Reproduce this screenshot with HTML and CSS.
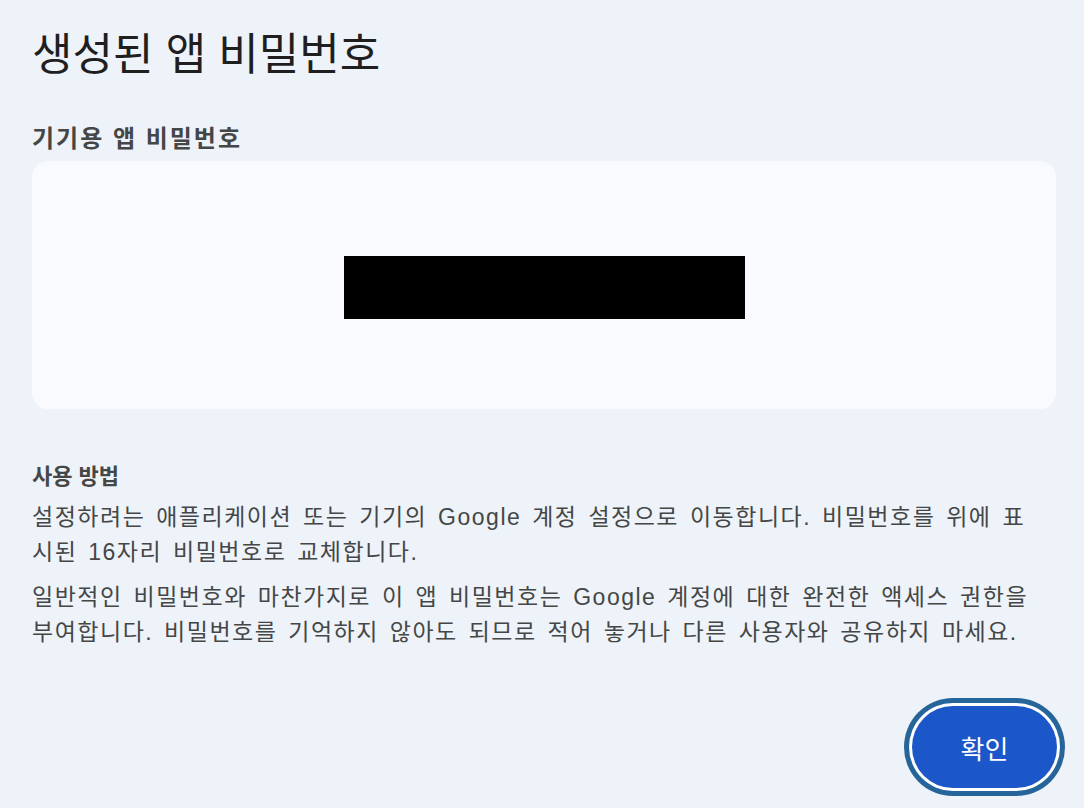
FILE: index.html
```html
<!DOCTYPE html>
<html lang="ko">
<head>
    <meta charset="UTF-8">
    <meta name="viewport" content="width=device-width, initial-scale=1.0">
    <title>생성된 앱 비밀번호</title>
    <link rel="stylesheet" href="styles.css">
</head>
<body>

    <div class="dialog">
        <h1 class="title">생성된 앱 비밀번호</h1>

        <h2 class="label">기기용 앱 비밀번호</h2>
        <div class="password-card">
            <div class="password-hidden"></div>
        </div>

        <h3 class="howto-title">사용 방법</h3>
        <div class="howto">
            <p>설정하려는 애플리케이션 또는 기기의 Google 계정 설정으로 이동합니다. 비밀번호를 위에 표시된 16자리 비밀번호로 교체합니다.</p>
            <p>일반적인 비밀번호와 마찬가지로 이 앱 비밀번호는 Google 계정에 대한 완전한 액세스 권한을 부여합니다. 비밀번호를 기억하지 않아도 되므로 적어 놓거나 다른 사용자와 공유하지 마세요.</p>
        </div>

        <div class="actions">
            <button class="confirm-button">확인</button>
        </div>
    </div>

</body>
</html>
```

FILE: styles.css
```css
body {
    margin: 0;
    background-color: #eef2f9;
    font-family: "Liberation Sans", "Noto Sans CJK KR", sans-serif;
}
.dialog {
    padding: 28px 28px 14px 32px;
}
.title {
    margin: 0;
    font-size: 44px;
    line-height: 54px;
    font-weight: 400;
    color: #1f1f1f;
}
.label {
    margin: 42px 0 7px;
    font-size: 24px;
    line-height: 30px;
    font-weight: 700;
    letter-spacing: 2px;
    color: #444746;
}
.password-card {
    height: 248px;
    background-color: #f8fafd;
    border-radius: 16px;
    display: flex;
    align-items: center;
    justify-content: center;
}
.password-hidden {
    width: 401px;
    height: 63px;
    margin-top: 5px;
    background-color: #000;
}
.howto-title {
    margin: 50px 0 0;
    font-size: 22px;
    line-height: 35px;
    font-weight: 700;
    color: #444746;
}
.howto {
    width: 1002px;
    margin-top: 6px;
    font-size: 23px;
    line-height: 35px;
    letter-spacing: 1.5px;
    word-spacing: 3px;
    color: #444746;
}
.howto p {
    margin: 0 0 10px;
}
.actions {
    display: flex;
    justify-content: flex-end;
    margin-top: 56px;
}
.confirm-button {
    width: 145px;
    height: 82px;
    margin-right: -1px;
    border: none;
    border-radius: 41px;
    background-color: #1b57c9;
    color: #fff;
    font-family: "Liberation Sans", "Noto Sans CJK KR", sans-serif;
    font-size: 26px;
    box-shadow: 0 0 0 3px #fff, 0 0 0 8px #25659a;
    cursor: pointer;
}
```
